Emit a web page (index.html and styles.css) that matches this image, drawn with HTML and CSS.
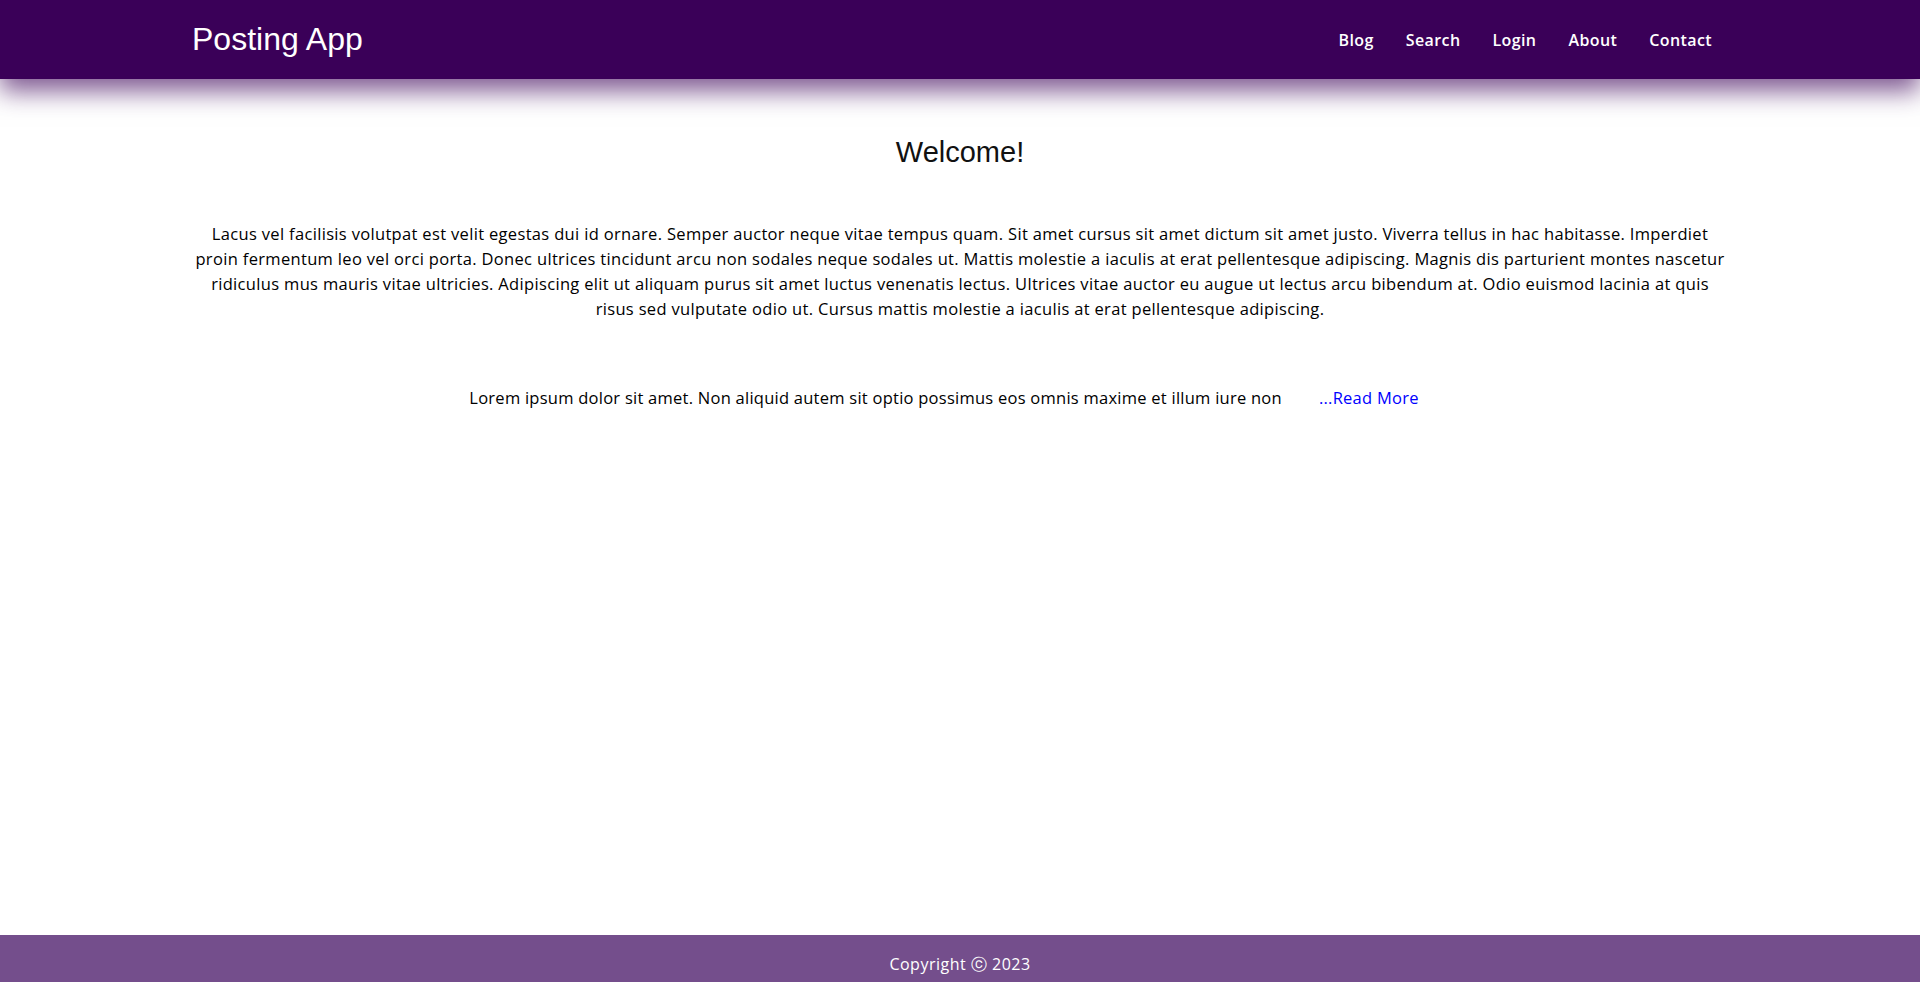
FILE: index.html
```html
<!DOCTYPE html>
<html lang="en">
<head>
<meta charset="utf-8">
<title>Posting App</title>
<link rel="stylesheet" href="styles.css">
</head>
<body>
<header class="topbar">
  <a class="brand" href="#">Posting App</a>
  <nav class="nav">
    <a href="#">Blog</a>
    <a href="#">Search</a>
    <a href="#">Login</a>
    <a href="#">About</a>
    <a href="#">Contact</a>
  </nav>
</header>
<main class="content">
  <h1 class="title">Welcome!</h1>
  <p class="intro">Lacus vel facilisis volutpat est velit egestas dui id ornare. Semper auctor neque vitae tempus quam. Sit amet cursus sit amet dictum sit amet justo. Viverra tellus in hac habitasse. Imperdiet proin fermentum leo vel orci porta. Donec ultrices tincidunt arcu non sodales neque sodales ut. Mattis molestie a iaculis at erat pellentesque adipiscing. Magnis dis parturient montes nascetur ridiculus mus mauris vitae ultricies. Adipiscing elit ut aliquam purus sit amet luctus venenatis lectus. Ultrices vitae auctor eu augue ut lectus arcu bibendum at. Odio euismod lacinia at quis risus sed vulputate odio ut. Cursus mattis molestie a iaculis at erat pellentesque adipiscing.</p>
  <div class="post">
    <span class="post-text">Lorem ipsum dolor sit amet. Non aliquid autem sit optio possimus eos omnis maxime et illum iure non</span>
    <a class="read-more" href="#">...Read More</a>
  </div>
</main>
<footer class="footer">Copyright ⓒ 2023</footer>
</body>
</html>
```
FILE: styles.css
```css
* { box-sizing: border-box; }
html, body { margin: 0; padding: 0; }
body {
  min-height: 100vh;
  display: flex;
  flex-direction: column;
  font-family: "Open Sans", "Noto Sans", sans-serif;
  color: #000;
  background: #fff;
}
.topbar {
  height: 79px;
  background: #3a0058;
  display: flex;
  align-items: center;
  justify-content: space-between;
  padding: 0 192px;
  box-shadow: 0 12px 24px rgba(58, 0, 88, 0.65);
  position: relative;
  z-index: 1;
}
.brand {
  font-family: "Liberation Sans", Arial, sans-serif;
  font-size: 32px;
  color: #fff;
  text-decoration: none;
}
.nav { display: flex; }
.nav a {
  color: #fff;
  text-decoration: none;
  font-size: 16px;
  font-weight: 600;
  letter-spacing: 0.4px;
  padding: 0 16px;
}
.content {
  flex: 1;
  width: 80%;
  margin: 0 auto;
  text-align: center;
}
.title {
  font-family: "Liberation Sans", Arial, sans-serif;
  font-weight: 400;
  font-size: 29px;
  line-height: 34px;
  color: #111;
  margin: 56px 0 52px;
}
.intro {
  font-size: 16.5px;
  letter-spacing: 0.33px;
  line-height: 25px;
  margin: 0;
}
.post {
  display: flex;
  justify-content: center;
  margin-top: 64px;
  font-size: 16.5px;
  letter-spacing: 0.25px;
  line-height: 25px;
}
.read-more {
  color: #0000ff;
  text-decoration: none;
  margin: 0 32px 0 37px;
}
.footer {
  height: 47px;
  background: #744e8c;
  color: #fff;
  font-size: 16px;
  letter-spacing: 0.5px;
  display: flex;
  align-items: center;
  justify-content: center;
  padding-top: 12px;
}
```
